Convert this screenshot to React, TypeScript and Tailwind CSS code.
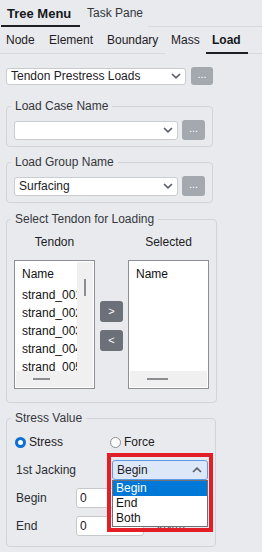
import React from "react";

function Chevron({ up = false }: { up?: boolean }) {
  return (
    <svg width="10" height="6" viewBox="0 0 10 6" className="shrink-0">
      <polyline
        points={up ? "1,5 5,1.2 9,5" : "1,1 5,4.8 9,1"}
        fill="none"
        stroke="#5b5f67"
        strokeWidth="1.7"
      />
    </svg>
  );
}

function Select({ className, text }: { className: string; text: string }) {
  return (
    <div
      className={
        "flex items-center justify-between rounded-[3px] border border-[#c9ccd1] bg-white pl-[4px] pr-[4px] text-[#1d2025] " +
        className
      }
    >
      <span className="leading-[14px]">{text}</span>
      <Chevron />
    </div>
  );
}

function Dots({ className }: { className: string }) {
  return (
    <div
      className={
        "flex items-center justify-center rounded-[3px] bg-[#a4a8af] text-[11px] leading-none text-white " +
        className
      }
    >
      <span className="-mt-[3px]">...</span>
    </div>
  );
}

function Legend({ children }: { children: React.ReactNode }) {
  return (
    <legend className="ml-[-3px] px-[4px] leading-[14px] text-[#34373c]">{children}</legend>
  );
}

function HThumb({ className }: { className: string }) {
  return <div className={"h-[2px] bg-[#8b8d91] " + className} />;
}

export default function App() {
  const strands = ["strand_001", "strand_002", "strand_003", "strand_004", "strand_005"];
  return (
    <div className="relative h-[552px] w-[262px] overflow-hidden bg-[#e9eaed] font-['Liberation_Sans',Arial,sans-serif] text-[12px] text-[#1d2025]">
      {/* Top tabs */}
      <div className="flex h-[27px]">
        <div className="ml-[1px] w-[79px] border-b-[2px] border-[#1c1f24] pl-[6px] pt-[6px] text-[13px] font-bold leading-[15px] text-[#15181c]">
          Tree Menu
        </div>
        <div className="w-[68px] pl-[7px] pt-[6px] leading-[14px] text-[#33363b]">Task Pane</div>
        <div className="flex-1 border-b border-[#d8dade]" />
      </div>
      {/* Sub tabs */}
      <div className="flex h-[27px] leading-[14px]">
        <div className="w-[43px] border-b border-[#d8dade] pl-[6px] pt-[6px]">Node</div>
        <div className="w-[58px] border-b border-[#d8dade] pl-[6px] pt-[6px]">Element</div>
        <div className="w-[64px] border-b border-[#d8dade] pl-[6px] pt-[6px]">Boundary</div>
        <div className="w-[41px] pl-[6px] pt-[6px]">Mass</div>
        <div className="w-[42px] border-b-[2px] border-[#1c1f24] pl-[6px] pt-[6px] font-bold text-[#15181c]">
          Load
        </div>
        <div className="flex-1 border-b border-[#d8dade]" />
      </div>

      <div className="pl-[6px]">
        {/* Load type */}
        <div className="mt-[13px] flex h-[18px] items-center">
          <Select className="h-[17px] w-[180px]" text="Tendon Prestress Loads" />
          <Dots className="ml-[5px] h-[18px] w-[22px]" />
        </div>

        {/* Load Case Name */}
        <fieldset className="mt-[14px] w-[207px] rounded-[4px] border border-[#d2d4d9] px-[7px] pb-[6px] pt-[7px]">
          <Legend>Load Case Name</Legend>
          <div className="flex items-center">
            <Select className="h-[19px] w-[164px]" text="" />
            <Dots className="ml-[4px] h-[20px] w-[23px]" />
          </div>
        </fieldset>

        {/* Load Group Name */}
        <fieldset className="mt-[8px] w-[207px] rounded-[4px] border border-[#d2d4d9] px-[7px] pb-[6px] pt-[7px]">
          <Legend>Load Group Name</Legend>
          <div className="flex items-center">
            <Select className="h-[19px] w-[164px]" text="Surfacing" />
            <Dots className="ml-[4px] h-[20px] w-[23px]" />
          </div>
        </fieldset>

        {/* Select Tendon */}
        <fieldset className="mt-[9px] w-[207px] rounded-[4px] border border-[#d2d4d9] px-[7px] pb-[13px] pt-[9px]">
          <Legend>Select Tendon for Loading</Legend>
          <div className="grid grid-cols-[81px_33px_81px] leading-[14px]">
            <div className="text-center">Tendon</div>
            <div />
            <div className="text-center">Selected</div>
          </div>
          <div className="mt-[11px] flex">
            {/* Tendon list */}
            <div className="flex h-[129px] w-[81px] flex-col border border-[#8c9096] bg-white p-[1px]">
              <div className="flex min-h-0 flex-1">
                <div className="flex-1 overflow-hidden pl-[6px] pt-[3px] text-[#111]">
                  <div className="mb-[3px] h-[18px] whitespace-nowrap leading-[18px]">Name</div>
                  {strands.map((s) => (
                    <div key={s} className="h-[18px] whitespace-nowrap leading-[18px]">
                      {s}
                    </div>
                  ))}
                </div>
                <div className="flex w-[16px] justify-center bg-[#f0f0f0] pt-[17px]">
                  <div className="h-[17px] w-[2px] bg-[#8b8d91]" />
                </div>
              </div>
              <div className="flex h-[16px] shrink-0 items-center bg-[#f0f0f0]">
                <HThumb className="ml-[17px] w-[17px]" />
              </div>
            </div>

            {/* Move buttons */}
            <div className="ml-[5px] flex w-[23px] flex-col gap-[8px] pt-[41px]">
              <div className="flex h-[21px] items-center justify-center rounded-[3px] bg-[#6b7079] text-[11px] text-white">
                &gt;
              </div>
              <div className="flex h-[21px] items-center justify-center rounded-[3px] bg-[#6b7079] text-[11px] text-white">
                &lt;
              </div>
            </div>

            {/* Selected list */}
            <div className="ml-[5px] flex h-[129px] w-[81px] flex-col border border-[#8c9096] bg-white p-[1px]">
              <div className="flex-1 pl-[6px] pt-[3px] text-[#111]">
                <div className="h-[18px] leading-[18px]">Name</div>
              </div>
              <div className="flex h-[16px] shrink-0 items-center bg-[#f0f0f0]">
                <HThumb className="ml-[17px] w-[21px]" />
              </div>
            </div>
          </div>
        </fieldset>

        {/* Stress Value */}
        <fieldset className="mt-[8px] w-[207px] rounded-[4px] border border-[#d2d4d9] px-[7px] pb-[10px] pt-[7px]">
          <Legend>Stress Value</Legend>
          <div className="flex flex-col gap-[8px] leading-[14px]">
            <div className="flex h-[20px] items-center">
              <div className="ml-[1px] flex w-[95px] items-center gap-[3px]">
                <div className="flex h-[11px] w-[11px] items-center justify-center rounded-full bg-[#0b6fd6]">
                  <div className="h-[5px] w-[5px] rounded-full bg-white" />
                </div>
                <span>Stress</span>
              </div>
              <div className="flex items-center gap-[3px]">
                <div className="h-[11px] w-[11px] rounded-full border border-[#8a8d92] bg-white" />
                <span>Force</span>
              </div>
            </div>
            <div className="flex h-[20px] items-center">
              <div className="w-[98px] pl-[2px] text-[#2a2d32]">1st Jacking</div>
              <div className="flex h-[20px] w-[96px] items-center justify-between rounded-[3px] border border-[#5b9be6] bg-[#dce7f7] pl-[4px] pr-[5px]">
                <span>Begin</span>
                <Chevron up />
              </div>
            </div>
            <div className="flex h-[20px] items-center">
              <div className="w-[62px] pl-[2px] text-[#2a2d32]">Begin</div>
              <div className="flex h-[20px] w-[68px] items-center rounded-[3px] border border-[#c5c8cd] bg-white pl-[3px]">
                0
              </div>
              <span className="ml-[13px] text-[#55585d]">kN/m²</span>
            </div>
            <div className="flex h-[20px] items-center">
              <div className="w-[62px] pl-[2px] text-[#2a2d32]">End</div>
              <div className="flex h-[20px] w-[68px] items-center rounded-[3px] border border-[#c5c8cd] bg-white pl-[3px]">
                0
              </div>
              <span className="ml-[13px] text-[#55585d]">kN/m²</span>
            </div>
          </div>
        </fieldset>
      </div>

      {/* Open dropdown list */}
      <div className="absolute left-[112px] top-[480px] flex h-[47px] w-[96px] flex-col border border-[#6e7074] bg-white leading-[15px]">
        <div className="h-[15px] bg-[#0078d7] pl-[3px] text-white">Begin</div>
        <div className="h-[15px] pl-[3px] text-[#111]">End</div>
        <div className="h-[15px] pl-[3px] text-[#111]">Both</div>
      </div>

      {/* Red highlight box */}
      <div className="pointer-events-none absolute left-[107px] top-[453px] h-[79px] w-[106px] border-[4px] border-[#e41e26]" />
    </div>
  );
}
